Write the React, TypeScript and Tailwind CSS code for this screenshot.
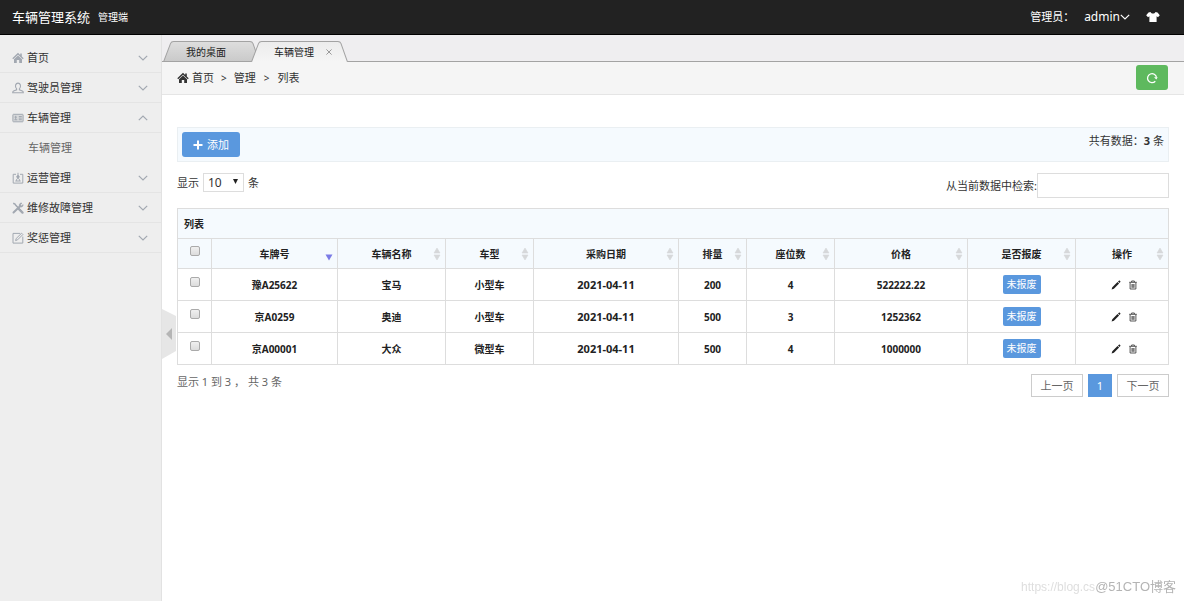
import { useState } from 'react';
import type { ReactNode } from 'react';
import clsx from 'clsx';

interface Vehicle {
  plate:    string;
  name:     string;
  type:     string;
  date:     string;
  capacity: string;
  seats:    string;
  price:    string;
  status:   string;
}

const vehicles: Vehicle[] = [
  { plate: '豫A25622', name: '宝马', type: '小型车', date: '2021-04-11', capacity: '200', seats: '4', price: '522222.22', status: '未报废' },
  { plate: '京A0259',  name: '奥迪', type: '小型车', date: '2021-04-11', capacity: '500', seats: '3', price: '1252362',   status: '未报废' },
  { plate: '京A00001', name: '大众', type: '微型车', date: '2021-04-11', capacity: '500', seats: '4', price: '1000000',   status: '未报废' },
];

const columns = [
  { label: '车牌号',   width: 'w-[126px]' },
  { label: '车辆名称', width: 'w-[108px]' },
  { label: '车型',     width: 'w-[88px]' },
  { label: '采购日期', width: 'w-[145px]' },
  { label: '排量',     width: 'w-[68px]' },
  { label: '座位数',   width: 'w-[88px]' },
  { label: '价格',     width: 'w-[133px]' },
  { label: '是否报废', width: 'w-[108px]' },
  { label: '操作',     width: 'w-[93px]' },
];

/* Icons */

function HomeIcon({ className }: { className?: string }) {
  return (
    <svg viewBox="0 0 12 12" className={clsx('size-3 shrink-0', className)} fill="currentColor">
      <path d="M6 .8.300 6.300l.9.9L6 2.700 10.800 7.200l.9-.9-1.900-1.800V1.500H8.200v1.400z" />
      <path d="M6 3.500 2 7.300V11h2.800V8h2.400v3H10V7.300z" />
    </svg>
  );
}

function UserIcon() {
  return (
    <svg viewBox="0 0 12 12" className="size-3 shrink-0" fill="none" stroke="currentColor" strokeWidth="1.100">
      <path d="M4.600 6.800C3.500 5.800 3.300 4.200 3.600 3 4 1.700 4.900 1.100 6 1.100S8 1.700 8.400 3c.3 1.200.1 2.800-1 3.800v1l3 1.200c.7.3.9.8.9 1.700H.7c0-.9.2-1.400.9-1.700l3-1.200z" />
    </svg>
  );
}

function CardIcon() {
  return (
    <svg viewBox="0 0 12 12" className="size-3 shrink-0" fill="none" stroke="currentColor">
      <rect x=".9" y="2.300" width="10.200" height="7.500" rx=".6" fill="currentColor" fillOpacity=".3" />
      <path d="M3.700 3.800v4M2.300 7.800h3M2.600 5.200h2.200M6.800 4.500h3M6.800 6.100h3M6.800 7.700h3" />
    </svg>
  );
}

function BadgeIcon() {
  return (
    <svg viewBox="0 0 12 12" className="size-3 shrink-0" fill="none" stroke="currentColor">
      <path d="M4 2.300H1.200v8.800h9.600V2.300H8" />
      <path d="M6 .8v3M3.300 9h5.400M4.400 8.800c0-1.600.6-2.300 1.600-2.300s1.600.7 1.600 2.300" />
      <circle cx="6" cy="4.800" r="1.200" fill="currentColor" />
    </svg>
  );
}

function ToolsIcon() {
  return (
    <svg viewBox="0 0 12 12" className="size-3 shrink-0" fill="none" stroke="currentColor">
      <path d="M1.200 1.200 3 2l1 1.600 5.800 6" strokeWidth="1.500" />
      <path d="m7 7.200 3.500 3.400" strokeWidth="2.300" strokeLinecap="round" />
      <path d="M1.500 10.500 8 4.200" strokeWidth="2" strokeLinecap="round" />
      <path d="M9.800 1.100C8.200.9 7 2.200 7.400 3.700c.3 1 1.600 1.500 2.600 1 .8-.4 1.200-1.200 1.100-2L9.600 3.900 8.400 2.800z" fill="currentColor" strokeWidth=".8" />
    </svg>
  );
}

function EditIcon() {
  return (
    <svg viewBox="0 0 12 12" className="size-3 shrink-0" fill="none" stroke="currentColor">
      <path d="M8.200 1.400H1v9.700h9.800V4.600" />
      <path d="m3.600 8.600.6-2.100 5.400-5.300 1.300 1.300-5.300 5.300z" />
    </svg>
  );
}

function Chevron({ up, className }: { up?: boolean; className?: string }) {
  return (
    <svg viewBox="0 0 10 6" className={clsx('h-[6px] w-[10px] shrink-0', className)} fill="none" stroke="currentColor" strokeWidth="1.200">
      <path d={up ? 'M.8 5.200 5 1l4.200 4.200' : 'M.8.8 5 5 9.200.8'} />
    </svg>
  );
}

function ShirtIcon() {
  return (
    <svg viewBox="0 0 14 12" className="h-3 w-3.5" fill="currentColor">
      <path d="M4.500 1c.6 1 1.400 1.500 2.500 1.500S8.900 2 9.500 1l2 .6L13.800 4.300 12 6.200l-1.400-.9V11H3.400V5.300L2 6.200.2 4.300 2.500 1.600z" />
    </svg>
  );
}

function RefreshIcon() {
  return (
    <svg viewBox="0 0 12 12" className="size-3" fill="none" stroke="currentColor" strokeWidth="1.300">
      <path d="M9.300 9.300A4.500 4.500 0 1 1 10.500 5.500" />
      <path d="M8 5.200h3.700L10.300 7.400z" fill="currentColor" stroke="none" />
    </svg>
  );
}

function PlusIcon() {
  return (
    <svg viewBox="0 0 10 10" className="size-2.5" fill="none" stroke="currentColor" strokeWidth="2">
      <path d="M5 .5v9M.5 5h9" />
    </svg>
  );
}

function PencilIcon() {
  return (
    <svg viewBox="0 0 10 10" className="size-2.5" fill="currentColor">
      <path d="M.6 9.500 1.300 7.200l5.200-5.100 1.600 1.500L2.900 8.700zM7 1.600 7.900.7c.3-.3.6-.3.9 0l.5.500c.3.3.3.6 0 .9l-.8.9z" />
    </svg>
  );
}

function TrashIcon() {
  return (
    <svg viewBox="0 0 10 10" className="size-2.5" fill="none" stroke="currentColor" strokeWidth=".9">
      <path d="M1.200 2.300h7.600M3.600 2.100V1h2.800v1.100M2.100 2.500V9h5.800V2.500M4 4v3.800M5 4v3.800M6 4v3.800" />
    </svg>
  );
}

function SortIcon({ active }: { active?: boolean }) {
  return (
    <svg viewBox="0 0 8 14" className="absolute top-2 right-1 h-3.5 w-2">
      {active ? (
        <path d="M.5 7.500h7l-3.500 6z" fill="#7b7be6" />
      ) : (
        <path d="M1 6h6L4 1zM1 8h6l-3 5z" fill="#d6d8da" stroke="#d6d8da" strokeWidth=".6" />
      )}
    </svg>
  );
}

/* Layout pieces */

function MenuItem({ icon, label, open }: { icon: ReactNode; label: string; open?: boolean }) {
  return (
    <button className="flex h-[30px] w-full items-center gap-[3px] border-b border-[#e4e4e4] pr-[13px] pl-3 text-left text-[#a2a8b1]">
      {icon}
      <span className="text-[#333]">{label}</span>
      <Chevron up={open} className="ml-auto" />
    </button>
  );
}

function Sidebar() {
  return (
    <aside className="w-[162px] shrink-0 border-r border-[#e2e2e2] bg-[#eee] pt-2">
      <nav>
        <MenuItem icon={<HomeIcon />} label="首页" />
        <MenuItem icon={<UserIcon />} label="驾驶员管理" />
        <MenuItem icon={<CardIcon />} label="车辆管理" open />
        <a href="#vehicles" className="flex h-[30px] items-center pl-7 text-[#666]">车辆管理</a>
        <MenuItem icon={<BadgeIcon />} label="运营管理" />
        <MenuItem icon={<ToolsIcon />} label="维修故障管理" />
        <MenuItem icon={<EditIcon />} label="奖惩管理" />
      </nav>
    </aside>
  );
}

function Tab({ label, active }: { label: string; active?: boolean }) {
  return (
    <div className={clsx('relative flex h-[21px] w-[97px] items-center text-[10px] text-[#222]', active && '-ml-[9px]')}>
      <svg viewBox="0 0 96 22" preserveAspectRatio="none" className="absolute inset-0 size-full">
        <defs>
          <linearGradient id="idleTab" x1="0" y1="0" x2="0" y2="1">
            <stop offset="0" stopColor="#dedede" />
            <stop offset="1" stopColor="#c9c9c9" />
          </linearGradient>
          <linearGradient id="activeTab" x1="0" y1="0" x2="0" y2="1">
            <stop offset="0" stopColor="#ececec" />
            <stop offset="1" stopColor="#f5f5f5" />
          </linearGradient>
        </defs>
        <path
          d="M.5 22 7.500 2.500Q8.200.5 10.500.5H86Q88.300.5 89 2.500L95.500 22"
          fill={active ? 'url(#activeTab)' : 'url(#idleTab)'}
          stroke="#a3a3a3"
        />
        {!active && <path d="M0 21.500h96" stroke="#a3a3a3" />}
      </svg>
      <a href="#tab" className="relative pl-[23px]">{label}</a>
      {active && (
        <button aria-label="关闭" className="relative ml-3 text-[#999]">
          <svg viewBox="0 0 6 6" className="size-1.5" fill="none" stroke="currentColor">
            <path d="m.4.4 5.200 5.200M5.600.4.4 5.600" />
          </svg>
        </button>
      )}
    </div>
  );
}

function CheckBox({ label }: { label: string }) {
  return (
    <input
      type="checkbox"
      aria-label={label}
      className="mb-1.5 inline-block size-2.5 appearance-none rounded-[2px] border border-[#aaa] bg-linear-to-b from-[#f0f0f0] to-[#dcdcdc] align-middle checked:bg-[#5a98de]"
    />
  );
}

function VehicleTable() {
  return (
    <table className="mt-2.5 w-full table-fixed border-collapse border border-[#ddd] text-center text-[10px] font-bold text-[#222]">
      <colgroup>
        <col className="w-[34px]" />
        {columns.map(col => <col key={col.label} className={col.width} />)}
      </colgroup>
      <thead className="bg-[#f5fafe]">
        <tr className="h-[30px]">
          <th colSpan={10} className="border border-[#ddd] px-1.5 text-left">列表</th>
        </tr>
        <tr className="h-[30px]">
          <th className="border border-[#ddd]"><CheckBox label="全选" /></th>
          {columns.map((col, i) => (
            <th key={col.label} className="relative border border-[#ddd]">
              {col.label}
              <SortIcon active={i === 0} />
            </th>
          ))}
        </tr>
      </thead>
      <tbody>
        {vehicles.map(v => (
          <tr key={v.plate} className="h-8">
            <td className="border border-[#ddd]"><CheckBox label={v.plate} /></td>
            <td className="border border-[#ddd]">{v.plate}</td>
            <td className="border border-[#ddd]">{v.name}</td>
            <td className="border border-[#ddd]">{v.type}</td>
            <td className="border border-[#ddd] text-[11px]">{v.date}</td>
            <td className="border border-[#ddd]">{v.capacity}</td>
            <td className="border border-[#ddd]">{v.seats}</td>
            <td className="border border-[#ddd]">{v.price}</td>
            <td className="border border-[#ddd]">
              <span className="inline-block h-[19px] rounded-[2px] bg-[#5a98de] px-1 leading-[19px] font-normal text-white">{v.status}</span>
            </td>
            <td className="border border-[#ddd]">
              <div className="flex justify-center gap-[7px] pl-1">
                <button aria-label="编辑"><PencilIcon /></button>
                <button aria-label="删除" className="text-[#444]"><TrashIcon /></button>
              </div>
            </td>
          </tr>
        ))}
      </tbody>
    </table>
  );
}

export default function App() {
  const [pageSize, setPageSize] = useState('10');
  const [keyword, setKeyword]   = useState('');

  return (
    <div className="flex min-h-screen flex-col bg-white font-['Noto_Sans','Noto_Sans_CJK_SC',sans-serif] text-[11px] leading-4 text-[#333]">
      <header className="flex h-[35px] shrink-0 items-center border-b border-black bg-[#222] px-3 text-white">
        <a href="#home" className="text-[13px]">车辆管理系统</a>
        <span className="ml-2 text-[10px]">管理端</span>
        <div className="ml-auto flex items-center pr-3">
          <span>管理员：</span>
          <button className="ml-2.5 flex items-center text-[12px]">
            admin
            <Chevron />
          </button>
          <button aria-label="换肤" className="ml-4"><ShirtIcon /></button>
        </div>
      </header>

      <div className="flex grow">
        <Sidebar />

        <main className="relative min-w-0 grow">
          <div className="flex h-[27px] items-end border-b border-[#a3a3a3] bg-[#efeef0]">
            <div className="-mb-px flex pl-px">
              <Tab label="我的桌面" />
              <Tab label="车辆管理" active />
            </div>
          </div>

          <div className="flex h-[33px] items-center border-b border-[#e5e5e5] bg-[#f5f5f5] pr-4 pb-px pl-[15px]">
            <HomeIcon />
            <a href="#home" className="ml-[3px]">首页</a>
            <span className="mx-[7px] text-[10px]">&gt;</span>
            <span>管理</span>
            <span className="mx-2 text-[10px]">&gt;</span>
            <span>列表</span>
            <button aria-label="刷新" className="ml-auto flex h-[25px] w-8 items-center justify-center rounded-[3px] bg-[#5eb95e] text-white">
              <RefreshIcon />
            </button>
          </div>

          <div className="px-[15px] pt-8">
            <div className="flex h-[35px] items-start justify-between border border-[#eaeff2] bg-[#f5fafe] p-1">
              <button className="flex h-[25px] items-center gap-1 rounded-[3px] bg-[#5a98de] px-[11px] text-white">
                <PlusIcon /> 添加
              </button>
              <span className="pt-px">共有数据：<strong>3</strong> 条</span>
            </div>

            <div className="mt-[11px] flex items-start justify-between">
              <label className="flex items-center gap-1">
                显示
                <span className="relative">
                  <select
                    value={pageSize}
                    onChange={e => setPageSize(e.target.value)}
                    className="block h-[19px] w-[41px] appearance-none border border-[#ddd] bg-white pl-1 text-[12px] leading-4"
                  >
                    <option>10</option>
                    <option>25</option>
                    <option>50</option>
                  </select>
                  <svg viewBox="0 0 5 5" className="pointer-events-none absolute top-1.5 right-1.5 size-[5px]">
                    <path d="M0 0h5L2.500 5z" fill="#222" />
                  </svg>
                </span>
                条
              </label>
              <label className="flex items-center">
                从当前数据中检索:
                <input
                  type="text"
                  value={keyword}
                  onChange={e => setKeyword(e.target.value)}
                  className="h-[25px] w-[132px] border border-[#ddd] bg-white px-1 outline-none"
                />
              </label>
            </div>

            <VehicleTable />

            <div className="mt-[9px] flex items-start justify-between text-[#666]">
              <p>显示 1 到 3 ， 共 3 条</p>
              <div className="flex gap-[5px]">
                <button className="h-[23px] w-[52px] border border-[#ccc]">上一页</button>
                <button className="h-[23px] w-6 border border-[#5a98de] bg-[#5a98de] text-white">1</button>
                <button className="h-[23px] w-[52px] border border-[#ccc]">下一页</button>
              </div>
            </div>
          </div>

          {/* Sidebar collapse handle */}
          <button aria-label="收起菜单" className="absolute top-[274px] left-0">
            <svg viewBox="0 0 14 50" className="h-[50px] w-3.5">
              <path d="M0 0 14 7v35L0 50z" fill="#e6e6e6" />
              <path d="M10 19v12l-6-6z" fill="#b5b5b5" />
            </svg>
          </button>
        </main>
      </div>

      {/* Watermark */}
      <div className="pointer-events-none fixed right-2 bottom-1.5 flex items-center font-['Liberation_Sans','Noto_Sans_CJK_SC',sans-serif] leading-4">
        <span className="text-[12px] text-[#dedede]">https://blog.cs</span>
        <span className="text-[13px] text-[#b4b4b4]">@51CTO博客</span>
      </div>
    </div>
  );
}
